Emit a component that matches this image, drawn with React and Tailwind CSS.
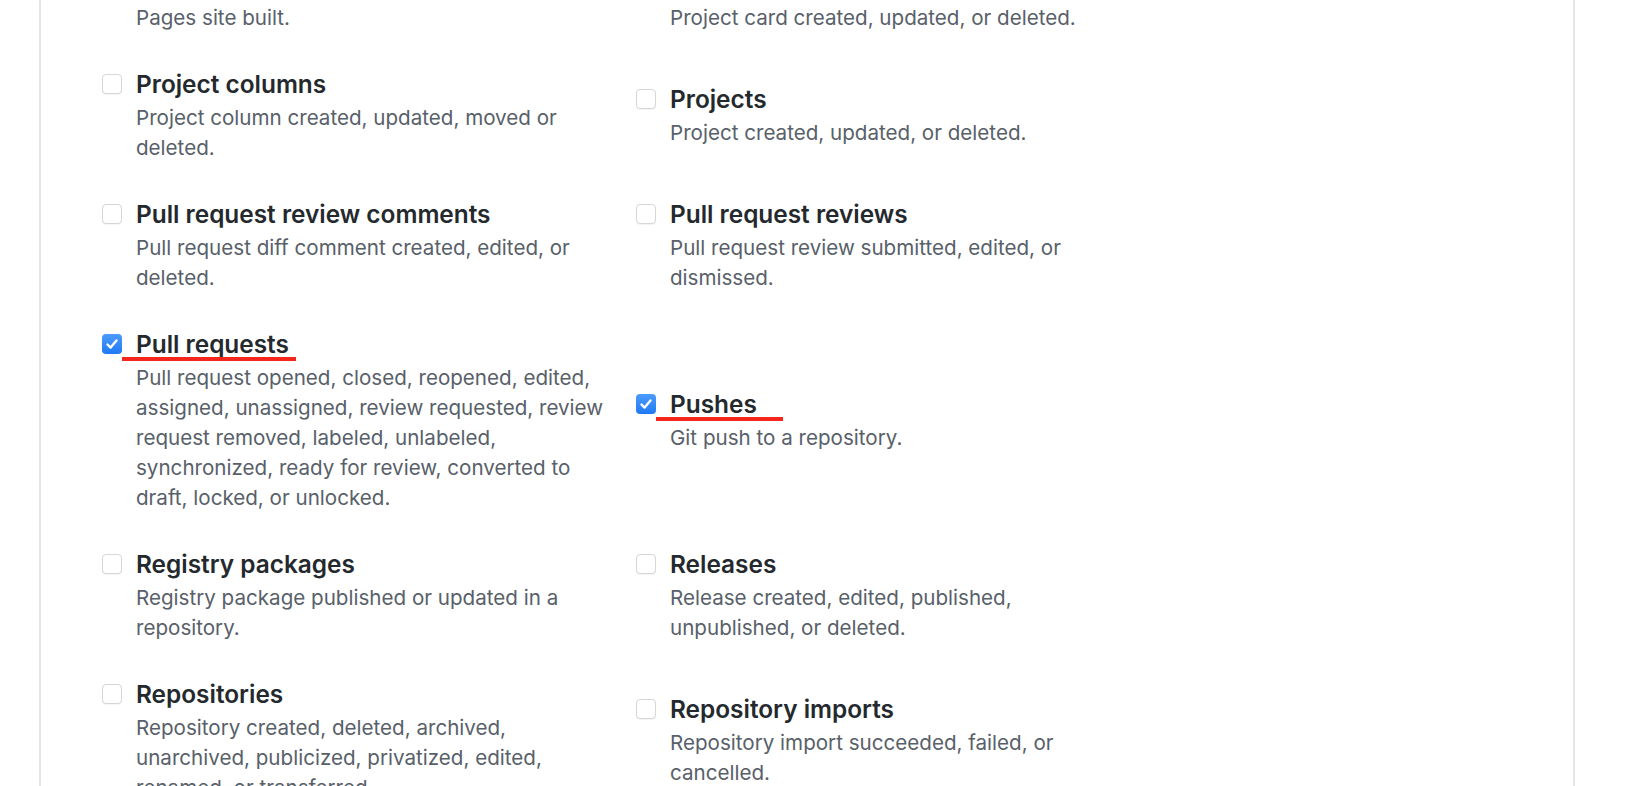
import React from 'react';

const rows = [
  [
    { title: 'Page builds', desc: 'Pages site built.' },
    { title: 'Project cards', desc: 'Project card created, updated, or deleted.' },
  ],
  [
    { title: 'Project columns', desc: 'Project column created, updated, moved or deleted.' },
    { title: 'Projects', desc: 'Project created, updated, or deleted.' },
  ],
  [
    { title: 'Pull request review comments', desc: 'Pull request diff comment created, edited, or deleted.' },
    { title: 'Pull request reviews', desc: 'Pull request review submitted, edited, or dismissed.' },
  ],
  [
    {
      title: 'Pull requests',
      desc: 'Pull request opened, closed, reopened, edited, assigned, unassigned, review requested, review request removed, labeled, unlabeled, synchronized, ready for review, converted to draft, locked, or unlocked.',
      checked: true,
      mark: 'w-[174px]',
    },
    { title: 'Pushes', desc: 'Git push to a repository.', checked: true, mark: 'w-[127px]' },
  ],
  [
    { title: 'Registry packages', desc: 'Registry package published or updated in a repository.' },
    { title: 'Releases', desc: 'Release created, edited, published, unpublished, or deleted.' },
  ],
  [
    { title: 'Repositories', desc: 'Repository created, deleted, archived, unarchived, publicized, privatized, edited, renamed, or transferred.' },
    { title: 'Repository imports', desc: 'Repository import succeeded, failed, or cancelled.' },
  ],
];

const Checkbox = ({ checked }) =>
  checked ? (
    <div className="mt-[7px] flex h-[20px] w-[20px] shrink-0 items-center justify-center rounded-[4px] bg-gradient-to-b from-[#4c9bfb] to-[#1f78f4]">
      <svg width="14" height="14" viewBox="0 0 14 14" fill="none">
        <path d="M2.5 7.5 L5.6 10.6 L11.5 3.4" stroke="white" strokeWidth="2.4" strokeLinecap="round" strokeLinejoin="round" />
      </svg>
    </div>
  ) : (
    <div className="mt-[7px] h-[20px] w-[20px] shrink-0 rounded-[4px] border border-[#d6d6d6] bg-white shadow-[0_1px_1px_rgba(0,0,0,0.05)]" />
  );

const EventItem = ({ item, right }) => (
  <div className="flex items-start gap-[14px]">
    <Checkbox checked={item.checked} />
    <div className={right ? 'w-[462px]' : 'w-[474px]'}>
      <div className="relative inline-block text-[24.4px] font-semibold leading-[34px] text-[#24292e]">
        {item.title}
        {item.mark && <span className={`absolute left-[-14px] top-[30px] h-[4px] bg-[#f5261c] ${item.mark}`} />}
      </div>
      <p className="mt-[2px] text-[20.6px] leading-[30px] text-[#586069]">{item.desc}</p>
    </div>
  </div>
);

export default function App() {
  return (
    <div className="h-[786px] w-full overflow-hidden bg-white font-['Inter','Liberation_Sans',sans-serif]">
      <div className="ml-[39px] h-[786px] w-[1536px] overflow-hidden border-x-2 border-[#e3e5e9]">
        <div className="mt-[-33px] grid grid-cols-[534px_534px] items-center gap-y-[34px] pl-[61px]">
          {rows.map((row, i) =>
            row.map((item, j) => <EventItem key={`${i}-${j}`} item={item} right={j === 1} />)
          )}
        </div>
      </div>
    </div>
  );
}
